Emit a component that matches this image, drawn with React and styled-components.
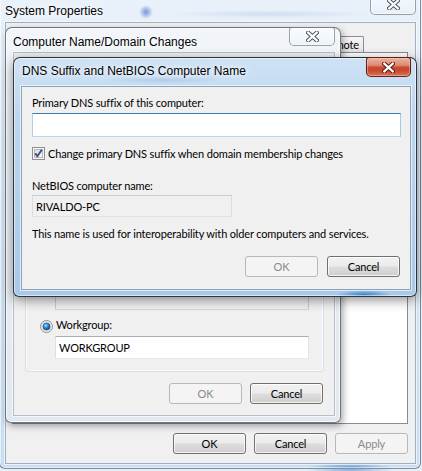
import React from "react";
import styled, { createGlobalStyle, css } from "styled-components";

const UI = 'Lato, "Liberation Sans", Arial, sans-serif';
const CAPTION = '"Liberation Sans", Arial, sans-serif';
const UI_SIZE = "11px";
const UI_TRACK = "-0.15px";

const GlobalStyle = createGlobalStyle`
  html, body { margin: 0; padding: 0; }
  body {
    width: 422px;
    height: 471px;
    overflow: hidden;
    background: #e8f0f7;
    font-family: ${UI};
    font-size: ${UI_SIZE};
    letter-spacing: ${UI_TRACK};
    color: #000;
  }
`;

const Desktop = styled.div`
  position: relative;
  width: 422px;
  height: 471px;
  overflow: hidden;
  background:
    radial-gradient(ellipse 45px 5px at 350px 470px, rgba(60, 120, 205, 0.55), rgba(60, 120, 205, 0)),
    #e8f0f7;
`;

const variants = {
  sys: css`
    border: 1px solid rgba(60, 75, 95, 0.6);
    background:
      radial-gradient(circle 7px at 146px 19px, rgba(70, 110, 205, 0.7), rgba(70, 110, 205, 0)),
      radial-gradient(ellipse 100px 4px at 270px 21px, rgba(120, 150, 210, 0.22), rgba(120, 150, 210, 0)),
      radial-gradient(ellipse 42px 4px at 350px 474px, rgba(50, 115, 200, 0.6), rgba(50, 115, 200, 0)),
      linear-gradient(180deg, #eaf2fa 0%, #d9e8f5 30%, #c9def2 100%);
    box-shadow: inset 0 0 0 1px rgba(255, 255, 255, 0.55);
  `,
  cn: css`
    border: 1px solid rgba(70, 78, 90, 0.75);
    background: linear-gradient(180deg, #f2f6fa 0%, #e8eef4 40%, #e1e8f0 100%);
    box-shadow: inset 0 0 0 1px rgba(255, 255, 255, 0.75), 2px 3px 7px rgba(0, 0, 0, 0.35);
  `,
  dns: css`
    border: 1px solid rgba(20, 25, 35, 0.85);
    background:
      radial-gradient(ellipse 28px 5px at 350px 237px, rgba(25, 120, 190, 0.85), rgba(25, 120, 190, 0)),
      radial-gradient(ellipse 60px 4px at 150px 22px, rgba(110, 150, 200, 0.25), rgba(110, 150, 200, 0)),
      linear-gradient(180deg, #cfe2f5 0%, #bcd6ef 25%, #a9c9e9 100%);
    box-shadow: inset 0 0 0 1px rgba(255, 255, 255, 0.55), 0 3px 12px rgba(0, 0, 0, 0.45);
  `,
};

const Win = styled.div`
  position: absolute;
  left: ${(p) => p.$x}px;
  top: ${(p) => p.$y}px;
  width: ${(p) => p.$w}px;
  height: ${(p) => p.$h}px;
  z-index: ${(p) => p.$z};
  box-sizing: border-box;
  display: flex;
  flex-direction: column;
  padding: 0 ${(p) => p.$pr}px ${(p) => p.$pb}px ${(p) => p.$pl}px;
  border-radius: 7px 7px 6px 6px;
  ${(p) => variants[p.$variant]}
`;

const TitleBar = styled.div`
  flex: none;
  height: ${(p) => p.$h}px;
  display: flex;
  align-items: flex-start;
  justify-content: space-between;
`;

const Caption = styled.div`
  padding: ${(p) => p.$top}px 0 0 ${(p) => p.$left}px;
  font-family: ${CAPTION};
  font-size: 12px;
  letter-spacing: 0;
  line-height: 14px;
  color: #000;
  white-space: nowrap;
  text-shadow: 0 0 5px #fff, 0 0 9px rgba(255, 255, 255, 0.9);
`;

const CloseBtn = styled.div`
  flex: none;
  box-sizing: border-box;
  width: ${(p) => p.$w}px;
  height: ${(p) => p.$h}px;
  margin-top: ${(p) => p.$mt}px;
  display: flex;
  align-items: center;
  justify-content: center;
  border-radius: 3px 3px 5px 5px;
  ${(p) =>
    p.$red
      ? css`
          border: 1px solid rgba(70, 15, 8, 0.85);
          background: linear-gradient(180deg, #ecb2a3 0%, #df8a73 40%, #c84a2f 52%, #c6492f 70%, #da7457 100%);
          box-shadow: inset 0 0 0 1px rgba(255, 210, 190, 0.45);
        `
      : css`
          border: 1px solid rgba(90, 100, 115, 0.6);
          background: linear-gradient(180deg, rgba(255, 255, 255, 0.6) 0%, rgba(255, 255, 255, 0.25) 50%, rgba(235, 240, 245, 0.45) 100%);
          box-shadow: inset 0 0 0 1px rgba(255, 255, 255, 0.5);
        `}
`;

const CloseGlyph = ({ red }) => (
  <svg width="13" height="11" viewBox="0 0 13 11">
    <path
      d="M2.2 1.6 L10.8 9.4 M10.8 1.6 L2.2 9.4"
      stroke={red ? "#5b1a10" : "#4d5763"}
      strokeWidth="4.2"
      strokeLinecap="square"
      fill="none"
    />
    <path
      d="M2.2 1.6 L10.8 9.4 M10.8 1.6 L2.2 9.4"
      stroke="#fff"
      strokeWidth="2.1"
      strokeLinecap="square"
      fill="none"
    />
  </svg>
);

const Client = styled.div`
  flex: 1;
  min-height: 0;
  box-sizing: border-box;
  background: #f0f0f0;
  border: 1px solid ${(p) => p.$edge};
  box-shadow: 0 0 0 1px rgba(255, 255, 255, 0.6);
  display: flex;
  flex-direction: column;
  overflow: hidden;
`;

/* ---------- common controls ---------- */

const Button = styled.button`
  flex: none;
  box-sizing: border-box;
  width: ${(p) => p.$w || 73}px;
  height: 21px;
  padding: 0;
  font-family: ${UI};
  font-size: ${UI_SIZE};
  letter-spacing: ${UI_TRACK};
  color: #000;
  border: 1px solid #707070;
  border-radius: 3px;
  background: linear-gradient(180deg, #f2f2f2 0%, #ebebeb 48%, #dddddd 52%, #cfcfcf 100%);
  box-shadow: inset 0 0 0 1px rgba(255, 255, 255, 0.75);
  &:disabled {
    color: #8a8a8a;
    border-color: #b5b9bc;
    background: #f4f4f4;
    box-shadow: none;
  }
`;

const ButtonRow = styled.div`
  flex: none;
  display: flex;
  justify-content: flex-end;
  gap: ${(p) => p.$gap}px;
  margin-top: ${(p) => p.$mt}px;
  padding-right: ${(p) => p.$pr || 0}px;
`;

const TextBox = styled.input`
  box-sizing: border-box;
  display: block;
  width: ${(p) => p.$w}px;
  height: ${(p) => p.$h}px;
  margin: ${(p) => p.$mt || 0}px 0 0 ${(p) => p.$ml || 0}px;
  padding: 0 3px;
  font-family: ${UI};
  font-size: ${UI_SIZE};
  letter-spacing: ${UI_TRACK};
  color: #000;
  outline: none;
  border: 1px solid;
  ${(p) =>
    p.$look === "focus"
      ? css`
          background: #fff;
          border-color: #3d7bad #a4c9e3 #b7d9ed #b5cfe7;
        `
      : p.$look === "readonly"
      ? css`
          background: #f0f0f0;
          border-color: #c9cbce #dcdddf #e2e3e5 #dcdddf;
        `
      : p.$look === "disabled"
      ? css`
          background: #f0f0f0;
          border-color: #adb2b5 #c9ccce #d3d5d7 #c9ccce;
        `
      : css`
          background: #fff;
          border-color: #abadb3 #e2e3ea #e3e9ef #dbdfe6;
        `}
`;

const Label = styled.div`
  flex: none;
  line-height: 15px;
  margin-top: ${(p) => p.$mt || 0}px;
  white-space: nowrap;
`;

const OptionRow = styled.label`
  flex: none;
  display: flex;
  align-items: flex-start;
  gap: 3px;
  height: 15px;
  line-height: 15px;
  margin-top: ${(p) => p.$mt || 0}px;
  white-space: nowrap;
  & > svg {
    flex: none;
    margin-top: ${(p) => p.$boxTop}px;
  }
`;

const CheckBox = () => (
  <svg width="13" height="13" viewBox="0 0 13 13">
    <defs>
      <linearGradient id="cbInner" x1="0" y1="0" x2="1" y2="1">
        <stop offset="0" stopColor="#d8dadc" />
        <stop offset="1" stopColor="#fbfbfb" />
      </linearGradient>
    </defs>
    <rect x="0.5" y="0.5" width="12" height="12" fill="#f6f6f6" stroke="#8e8f8f" />
    <rect x="2.5" y="2.5" width="8" height="8" fill="url(#cbInner)" stroke="#b6babe" />
    <path d="M3.2 6.4 L5.4 9.2 L9.8 2.8" stroke="#3b4d87" strokeWidth="1.9" fill="none" />
  </svg>
);

const Radio = ({ on, id }) => (
  <svg width="13" height="13" viewBox="0 0 13 13">
    <defs>
      <radialGradient id={id} cx="40%" cy="35%" r="70%">
        <stop offset="0" stopColor="#a6e0fb" />
        <stop offset="0.45" stopColor="#2f8ccf" />
        <stop offset="1" stopColor="#0b3b73" />
      </radialGradient>
    </defs>
    <circle cx="6.5" cy="6.5" r="6" fill="#f3f3f3" stroke="#8b8d8f" />
    <circle cx="6.5" cy="6.5" r="4.6" fill="none" stroke="#d6d8da" strokeWidth="0.8" />
    {on && <circle cx="6.5" cy="6.5" r="3.6" fill={`url(#${id})`} stroke="#1c4a80" strokeWidth="0.6" />}
  </svg>
);

/* ---------- System Properties ---------- */

const SysBody = styled.div`
  flex: 1;
  display: flex;
  flex-direction: column;
  padding: 11px 7px 9px 6px;
  min-height: 0;
`;

const TabStrip = styled.div`
  flex: none;
  height: 18px;
  display: flex;
  justify-content: flex-end;
  align-items: flex-end;
  padding-right: 44px;
`;

const Tab = styled.div`
  flex: none;
  box-sizing: border-box;
  height: 16px;
  padding: 0 4px 0 5px;
  line-height: 15px;
  white-space: nowrap;
  border: 1px solid #898c95;
  border-bottom: none;
  border-radius: 2px 2px 0 0;
  background: linear-gradient(180deg, #f6f6f6 0%, #ececec 50%, #e3e3e3 100%);
`;

const TabPanel = styled.div`
  flex: 1;
  background: #fff;
  border: 1px solid #898c95;
`;

/* ---------- Computer Name/Domain Changes ---------- */

const CnBody = styled.div`
  flex: 1;
  min-height: 0;
  display: flex;
  flex-direction: column;
  justify-content: flex-end;
  padding: 0 10px 11px 11px;
`;

const GroupBox = styled.div`
  flex: none;
  padding: 0 14px 12px 14px;
  border: 1px solid #d5dfe5;
  border-radius: 3px;
  box-shadow: inset 0 0 0 1px rgba(255, 255, 255, 0.7);
  display: flex;
  flex-direction: column;
`;

/* ---------- DNS Suffix dialog ---------- */

const DnsBody = styled.div`
  flex: 1;
  display: flex;
  flex-direction: column;
  padding: 8px 9px 0 10px;
`;

export default function App() {
  return (
    <>
      <GlobalStyle />
      <Desktop>
        <Win $variant="sys" $x={-1} $y={-8} $w={422} $h={477} $pl={5} $pr={4} $pb={4} $z={1}>
          <TitleBar $h={29}>
            <Caption $top={11} $left={0}>System Properties</Caption>
            <CloseBtn $w={46} $h={21} $mt={1}>
              <CloseGlyph />
            </CloseBtn>
          </TitleBar>
          <Client $edge="#9fb0c2">
            <SysBody>
              <TabStrip>
                <Tab>Remote</Tab>
              </TabStrip>
              <TabPanel />
              <ButtonRow $gap={8} $mt={9}>
                <Button>OK</Button>
                <Button>Cancel</Button>
                <Button disabled>Apply</Button>
              </ButtonRow>
            </SysBody>
          </Client>
        </Win>

        <Win $variant="cn" $x={5} $y={27} $w={336} $h={396} $pl={7} $pr={5} $pb={6} $z={2}>
          <TitleBar $h={24}>
            <Caption $top={7} $left={0}>Computer Name/Domain Changes</Caption>
            <CloseBtn $w={46} $h={19} $mt={-1}>
              <CloseGlyph />
            </CloseBtn>
          </TitleBar>
          <Client $edge="#b4c0cc">
            <CnBody>
              <GroupBox>
                <TextBox $look="disabled" $w={254} $h={23} $mt={12} $ml={15} readOnly value="" />
                <OptionRow $boxTop={3} $mt={7}>
                  <Radio on id="rdWork" />
                  <span>Workgroup:</span>
                </OptionRow>
                <TextBox $w={254} $h={23} $mt={4} $ml={15} readOnly value="WORKGROUP" />
              </GroupBox>
              <ButtonRow $gap={8} $mt={11} $pr={1}>
                <Button disabled>OK</Button>
                <Button>Cancel</Button>
              </ButtonRow>
            </CnBody>
          </Client>
        </Win>

        <Win $variant="dns" $x={13} $y={57} $w={404} $h={240} $pl={7} $pr={5} $pb={6} $z={3}>
          <TitleBar $h={28}>
            <Caption $top={6} $left={1}>DNS Suffix and NetBIOS Computer Name</Caption>
            <CloseBtn $red $w={45} $h={20} $mt={-1}>
              <CloseGlyph red />
            </CloseBtn>
          </TitleBar>
          <Client $edge="#8fa4ba">
            <DnsBody>
              <Label>Primary DNS suffix of this computer:</Label>
              <TextBox $look="focus" $w={369} $h={24} $mt={3} readOnly value="" />
              <OptionRow $boxTop={1} $mt={9}>
                <CheckBox />
                <span>Change primary DNS suffix when domain membership changes</span>
              </OptionRow>
              <Label $mt={17}>NetBIOS computer name:</Label>
              <TextBox $look="readonly" $w={200} $h={22} $mt={2} readOnly value="RIVALDO-PC" />
              <Label $mt={9}>This name is used for interoperability with older computers and services.</Label>
              <ButtonRow $gap={9} $mt={15} $pr={1}>
                <Button disabled>OK</Button>
                <Button>Cancel</Button>
              </ButtonRow>
            </DnsBody>
          </Client>
        </Win>
      </Desktop>
    </>
  );
}
